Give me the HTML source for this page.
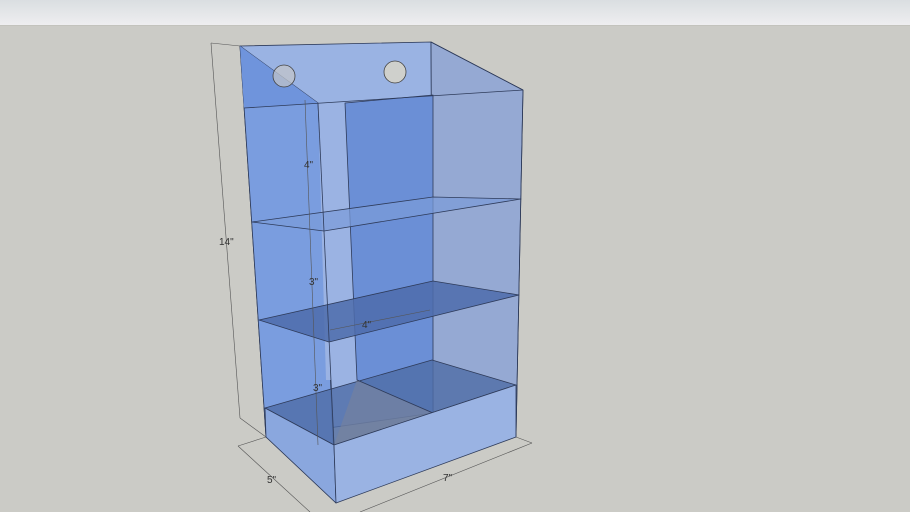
<!DOCTYPE html>
<html><head><style>
html,body{margin:0;padding:0;}
body{width:910px;height:512px;overflow:hidden;background:#cbcbc6;position:relative;font-family:"Liberation Sans",sans-serif;}
.top{position:absolute;left:0;top:0;width:910px;height:25px;background:linear-gradient(#dadee1,#eeeef0);border-bottom:1px solid #c3c3bd;}
svg{position:absolute;left:0;top:0;}
text{font-family:"Liberation Sans",sans-serif;font-size:10px;fill:#333;}
</style></head><body>
<div class="top"></div>
<svg width="910" height="512" viewBox="0 0 910 512">
<g stroke="#2e3b5a" stroke-width="0.8" stroke-linejoin="round">
<polygon points="240,46 431,42 433,413 266,437" fill="#9ab3e3"/>
<polygon points="431,42 523,90 516,437 433,413" fill="#95a9d3"/>
<polygon points="240,46 318,103 336,503 266,437" fill="#7a9ddf"/>
<polygon points="240,46 318,103 244,108" fill="#6f94dc" stroke="none"/>
<polygon points="318,103 345,103 357,380 326,380" fill="#9bb3e3" stroke="none"/>
<polygon points="345,103 433,95 433,413 357,380" fill="#6b8fd6"/>
<line x1="244" y1="108" x2="523" y2="90"/>
<polygon points="252,222 433,197 521,199 324,231" fill="#7b9bd8" fill-opacity="0.7"/>
<polygon points="259,320 433,281 519,295 329,342" fill="#4d6cab" fill-opacity="0.85"/>
<polygon points="265,408 432,360 516,385 334,445" fill="#4f6da6" fill-opacity="0.8"/>
<polygon points="334,445 357,380 433,413 470,400 334,445" fill="#7a8499" stroke="none" fill-opacity="0.55"/>
<line x1="357" y1="380" x2="433" y2="413"/>
<polygon points="433,413 516,385 516,437" fill="#7ea2e5" stroke="none"/>
<polygon points="265,408 334,445 336,503 266,437" fill="#8aa7de"/>
<polygon points="334,445 516,385 516,437 336,503" fill="#9ab3e3"/>
<line x1="318" y1="103" x2="334" y2="445"/>
<line x1="431" y1="42" x2="523" y2="90"/>
<line x1="523" y1="90" x2="516" y2="437"/>
</g>
<circle cx="284" cy="76" r="11" fill="#c4c6c8" fill-opacity="0.7" stroke="#444" stroke-width="0.8"/>
<circle cx="395" cy="72" r="11" fill="#cfd0cc" stroke="#444" stroke-width="0.8"/>
<g stroke="#555" stroke-width="0.6" fill="none">
<line x1="211" y1="43" x2="240" y2="418"/>
<line x1="211" y1="43" x2="240" y2="46"/>
<line x1="240" y1="418" x2="266" y2="437"/>
<line x1="305" y1="100" x2="318" y2="445"/>
<line x1="238" y1="446" x2="266" y2="437"/>
<line x1="238" y1="446" x2="310" y2="512"/>
<line x1="360" y1="512" x2="532" y2="443"/>
<line x1="516" y1="437" x2="532" y2="443"/>
<line x1="330" y1="330" x2="430" y2="310"/>
</g>
<text x="219" y="245">14"</text>
<text x="304" y="168">4"</text>
<text x="309" y="285">3"</text>
<text x="313" y="391">3"</text>
<text x="362" y="328">4"</text>
<text x="267" y="483">5"</text>
<text x="443" y="481">7"</text>
</svg>
</body></html>
